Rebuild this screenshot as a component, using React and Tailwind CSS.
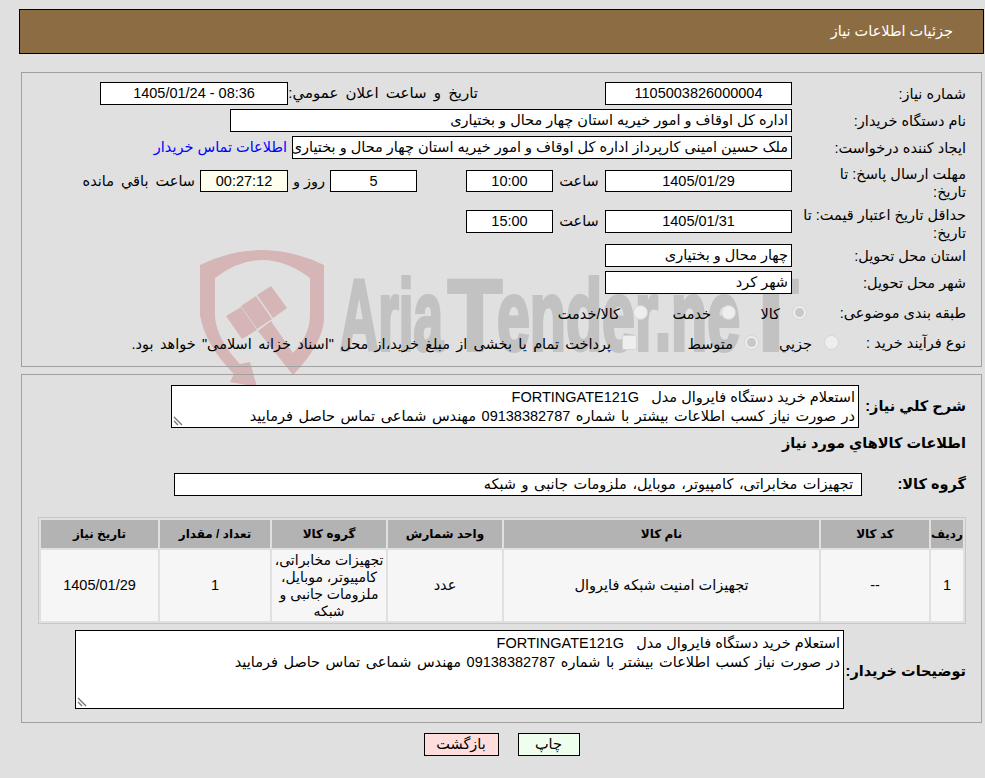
import React from "react";

const F = ({ w, h = "h-[23px]", className = "", children, bg = "bg-white" }) => (
  <div className={`border border-black ${bg} ${w} ${h} shrink-0 flex items-center justify-center leading-none whitespace-nowrap overflow-hidden ${className}`}>{children}</div>
);
const L = ({ children, w = "w-[189px]", className = "" }) => (
  <div className={`${w} shrink-0 pr-[15px] text-right leading-[20px] whitespace-nowrap ${className}`}>{children}</div>
);
const Radio = ({ on }) => (
  <span className="w-[15px] h-[15px] mb-[6px] rounded-full bg-[#eeeeee] border border-[#d4d4d4] flex items-center justify-center shrink-0">
    {on && <span className="w-[9px] h-[9px] rounded-full bg-[#c8c8c8]" />}
  </span>
);
const headers = ["ردیف", "کد کالا", "نام کالا", "واحد شمارش", "گروه کالا", "تعداد / مقدار", "تاریخ نیاز"];
const widths = ["w-[32px]", "w-[108px]", "w-[315px]", "w-[114px]", "w-[114px]", "w-[110px]", "w-[117px]"];
const row = [
  "1",
  "--",
  "تجهیزات امنیت شبکه فایروال",
  "عدد",
  <span key="g" className="whitespace-nowrap text-[14px]">تجهیزات مخابراتی،<br />کامپیوتر، موبایل،<br />ملزومات جانبی و<br />شبکه</span>,
  "1",
  "1405/01/29",
];

const Watermark = () => (
  <svg className="absolute left-[190px] top-[245px] pointer-events-none [direction:ltr]" width="640" height="150" viewBox="190 245 640 150">
    <g fill="#d5b5b5">
      <path d="M200 265 Q262 235 324 265 L324 320 Q322 345 293 375 L258 331 L271 321 L293 353 Q310 335 310 315 L310 278 Q262 242 215 278 L215 317 Q217 340 240 364 L250 362 L257 387 L230 382 L234 374 Q205 345 200 315 Z" />
      <path d="M226 316 L241 307 L257 330 L242 339 Z" />
      <path d="M241 306 L256 296 L272 319 L257 329 Z" />
      <path d="M257 295 L271 286 L287 308 L273 318 Z" />
    </g>
    <g fill="#c2c2c2" stroke="#c2c2c2" strokeWidth="4" fontFamily="'Liberation Sans', sans-serif" fontWeight="700" fontSize="100">
      <text x="340" y="350" textLength="103" lengthAdjust="spacingAndGlyphs" className="[direction:ltr]">Aria</text>
      <text x="448" y="350" textLength="54" lengthAdjust="spacingAndGlyphs" className="[direction:ltr]">T</text>
      <text x="497" y="350" textLength="243" lengthAdjust="spacingAndGlyphs" className="[direction:ltr]">ender.ne</text>
      <text x="744" y="350" textLength="54" lengthAdjust="spacingAndGlyphs" className="[direction:ltr]">T</text>
    </g>
  </svg>
);

function Grip() {
  return (
    <svg className="absolute left-[1px] bottom-[1px]" width="11" height="10" viewBox="0 0 11 10">
      <path d="M1 1 L9 9 M1 5 L5 9" stroke="#777777" strokeWidth="1.4" fill="none" />
    </svg>
  );
}

const DESC = (
  <>
    <div>استعلام خرید دستگاه فایروال مدل   FORTINGATE121G</div>
    <div className="[word-spacing:1.5px]">در صورت نیاز کسب اطلاعات بیشتر با شماره 09138382787 مهندس شماعی تماس حاصل فرمایید</div>
  </>
);

export default function App() {
  return (
    <div dir="rtl" className="relative w-[985px] h-[778px] bg-[#e0e0e0] overflow-hidden text-[14.5px] text-black font-['Liberation_Sans','DejaVu_Sans',sans-serif]">
      <Watermark />
      <div className="relative pt-[9px] pl-[19px] pr-[1px]">
        <div className="h-[45px] bg-[#8c6c42] border border-black text-white flex items-center pr-[30px]">جزئیات اطلاعات نیاز</div>

        <div className="mt-[18px] mx-[2px] h-[295px] border border-[#a0a0a0]">
          <div className="flex h-[23px] items-center mt-[9px]">
            <L>شماره نیاز:</L>
            <F w="w-[187px]">1105003826000004</F>
            <div className="w-[127px] shrink-0" />
            <div className="w-[190px] shrink-0 whitespace-nowrap text-[15px] [word-spacing:3px]">تاریخ و ساعت اعلان عمومي:</div>
            <F w="w-[188px]">08:36 - 1405/01/24</F>
          </div>
          <div className="flex h-[23px] items-center mt-[4px]">
            <L>نام دستگاه خریدار:</L>
            <F w="w-[562px]" className="!justify-start pr-[3px]">اداره کل اوقاف و امور خیریه استان چهار محال و بختیاری</F>
          </div>
          <div className="flex h-[23px] items-center mt-[4px]">
            <L>ایجاد کننده درخواست:</L>
            <F w="w-[500px]" className="!justify-start pr-[3px]">ملک حسین امینی کارپرداز اداره کل اوقاف و امور خیریه استان چهار محال و بختیاری</F>
            <div className="mr-[5px] text-[#0000ff] whitespace-nowrap">اطلاعات تماس خریدار</div>
          </div>
          <div className="flex h-[22px] items-start mt-[11px]">
            <L className="!leading-[18px] -mt-[5px]">مهلت ارسال پاسخ: تا<br />تاریخ:</L>
            <F w="w-[187px]" h="h-[22px]">1405/01/29</F>
            <div className="w-[52px] shrink-0 text-center leading-[22px]">ساعت</div>
            <F w="w-[87px]" h="h-[22px]">10:00</F>
            <div className="w-[49px] shrink-0" />
            <F w="w-[87px]" h="h-[22px]">5</F>
            <div className="w-[42px] shrink-0 text-center leading-[22px]">روز و</div>
            <F w="w-[88px]" h="h-[22px]" bg="bg-[#ffffee]">00:27:12</F>
            <div className="mr-[5px] whitespace-nowrap leading-[22px] [word-spacing:3px]">ساعت باقي مانده</div>
          </div>
          <div className="flex h-[23px] items-start mt-[18px]">
            <L className="!leading-[18px] -mt-[4px]">حداقل تاریخ اعتبار قیمت: تا<br />تاریخ:</L>
            <F w="w-[187px]">1405/01/31</F>
            <div className="w-[52px] shrink-0 text-center leading-[23px]">ساعت</div>
            <F w="w-[87px]">15:00</F>
          </div>
          <div className="flex h-[23px] items-center mt-[11px]">
            <L>استان محل تحویل:</L>
            <F w="w-[187px]" className="!justify-start pr-[3px]">چهار محال و بختیاری</F>
          </div>
          <div className="flex h-[23px] items-center mt-[4px]">
            <L>شهر محل تحویل:</L>
            <F w="w-[187px]" className="!justify-start pr-[3px]">شهر کرد</F>
          </div>
          <div className="flex h-[30px] items-center mt-[6px]">
            <L w="w-[174px]" className="mb-[4px]">طبقه بندی موضوعی:</L>
            <Radio on />
            <span className="mr-[12px] w-[44px] shrink-0">کالا</span>
            <Radio />
            <span className="mr-[10px] w-[63px] shrink-0">خدمت</span>
            <Radio />
            <span className="mr-[13px]">کالا/خدمت</span>
          </div>
          <div className="flex h-[30px] items-center">
            <L w="w-[142px]" className="mb-[4px]">نوع فرآیند خرید :</L>
            <Radio />
            <span className="mr-[12px] w-[53px] shrink-0">جزیي</span>
            <Radio on />
            <span className="mr-[11px] w-[96px] shrink-0">متوسط</span>
            <span className="w-[15px] h-[15px] mb-[6px] rounded-[2px] bg-[#eeeeee] border border-[#d4d4d4] shrink-0" />
            <span className="mr-[11px] whitespace-nowrap [word-spacing:2.3px]">پرداخت تمام یا بخشی از مبلغ خرید،از محل "اسناد خزانه اسلامی" خواهد بود.</span>
          </div>
        </div>

        <div className="mt-[7px] mx-[2px] h-[349px] border border-[#a0a0a0]">
          <div className="flex mt-[10px] h-[43px]">
            <L w="w-[122px]" className="font-bold !leading-[43px]">شرح کلي نیاز:</L>
            <div className="w-[688px] h-[43px] bg-white border border-black pr-[3px] pt-[2px] leading-[19px] relative whitespace-pre overflow-hidden">
              {DESC}
              <Grip />
            </div>
          </div>
          <div className="pr-[15px] font-bold leading-[20px] mt-[5px]">اطلاعات کالاهاي مورد نیاز</div>
          <div className="flex mt-[20px] h-[23px]">
            <L w="w-[119px]" className="font-bold !leading-[23px]">گروه کالا:</L>
            <div className="w-[688px] h-[23px] bg-white border border-black pr-[8px] leading-[21px] whitespace-nowrap [word-spacing:1.5px]">تجهیزات مخابراتی، کامپیوتر، موبایل، ملزومات جانبی و شبکه</div>
          </div>
          <div className="mt-[21px] mr-[15px] w-[928px] border border-[#c8c8c8] p-[2px]">
            <div className="flex gap-[2px]">
              {headers.map((h, i) => (
                <div key={h} className={`${widths[i]} h-[28px] bg-[#b3b3b3] flex items-center justify-center font-bold text-[12px] whitespace-nowrap`}>{h}</div>
              ))}
            </div>
            <div className="flex gap-[2px] mt-[2px]">
              {row.map((c, i) => (
                <div key={i} className={`${widths[i]} h-[71px] bg-[#f6f6f6] flex items-center justify-center text-center leading-[17px] px-[1px]`}>{c}</div>
              ))}
            </div>
          </div>
          <div className="flex mt-[6px]">
            <L w="w-[137px]" className="font-bold !leading-[82px]">توضیحات خریدار:</L>
            <div className="w-[769px] h-[79px] bg-white border border-black pr-[3px] pt-[3px] leading-[19px] relative whitespace-pre overflow-hidden">
              {DESC}
              <Grip />
            </div>
          </div>
        </div>

        <div className="flex justify-center gap-[19px] mt-[10px]">
          <button className="w-[62px] h-[23px] bg-[#eeffee] border border-black leading-none">چاپ</button>
          <button className="w-[75px] h-[23px] bg-[#ffdddd] border border-black leading-none">بازگشت</button>
        </div>
      </div>
    </div>
  );
}
